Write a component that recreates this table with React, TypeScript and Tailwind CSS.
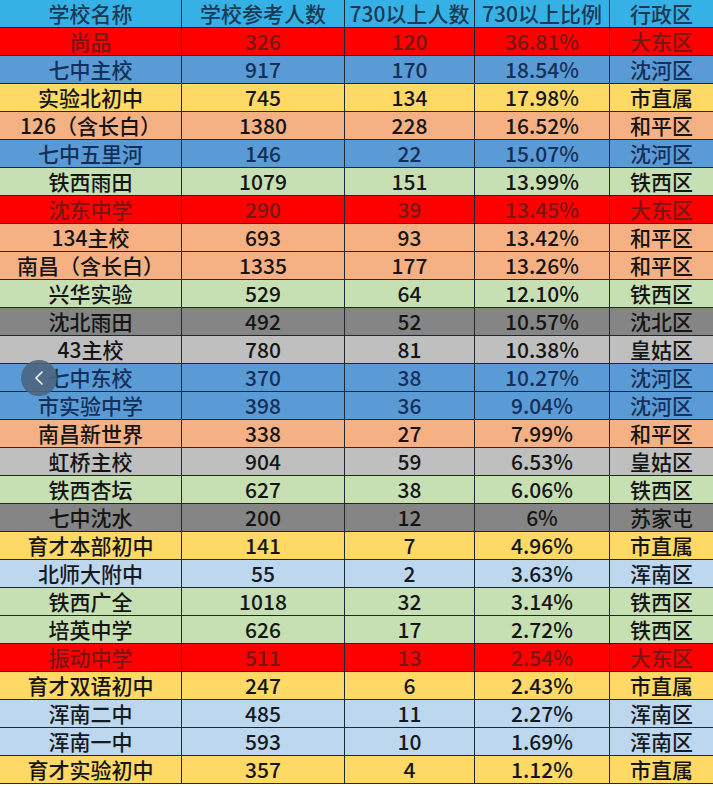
import React from "react";

type Row = [string, string, string, string, string, string];

const C: Record<string, { bg: string; fg: string }> = {
  red: { bg: "bg-[#fe0000]", fg: "text-[#7a1515]" },
  blue: { bg: "bg-[#5b9bd5]", fg: "text-[#13305a]" },
  yellow: { bg: "bg-[#fed966]", fg: "text-[#151515]" },
  orange: { bg: "bg-[#f5b184]", fg: "text-[#151515]" },
  green: { bg: "bg-[#c6e0b4]", fg: "text-[#151515]" },
  dgrey: { bg: "bg-[#858585]", fg: "text-[#151515]" },
  lgrey: { bg: "bg-[#bfbfbf]", fg: "text-[#151515]" },
  lblue: { bg: "bg-[#bdd7ee]", fg: "text-[#151a22]" },
};

const rows: Row[] = [
  ["尚品", "326", "120", "36.81%", "大东区", "red"],
  ["七中主校", "917", "170", "18.54%", "沈河区", "blue"],
  ["实验北初中", "745", "134", "17.98%", "市直属", "yellow"],
  ["126（含长白）", "1380", "228", "16.52%", "和平区", "orange"],
  ["七中五里河", "146", "22", "15.07%", "沈河区", "blue"],
  ["铁西雨田", "1079", "151", "13.99%", "铁西区", "green"],
  ["沈东中学", "290", "39", "13.45%", "大东区", "red"],
  ["134主校", "693", "93", "13.42%", "和平区", "orange"],
  ["南昌（含长白）", "1335", "177", "13.26%", "和平区", "orange"],
  ["兴华实验", "529", "64", "12.10%", "铁西区", "green"],
  ["沈北雨田", "492", "52", "10.57%", "沈北区", "dgrey"],
  ["43主校", "780", "81", "10.38%", "皇姑区", "lgrey"],
  ["七中东校", "370", "38", "10.27%", "沈河区", "blue"],
  ["市实验中学", "398", "36", "9.04%", "沈河区", "blue"],
  ["南昌新世界", "338", "27", "7.99%", "和平区", "orange"],
  ["虹桥主校", "904", "59", "6.53%", "皇姑区", "lgrey"],
  ["铁西杏坛", "627", "38", "6.06%", "铁西区", "green"],
  ["七中沈水", "200", "12", "6%", "苏家屯", "dgrey"],
  ["育才本部初中", "141", "7", "4.96%", "市直属", "yellow"],
  ["北师大附中", "55", "2", "3.63%", "浑南区", "lblue"],
  ["铁西广全", "1018", "32", "3.14%", "铁西区", "green"],
  ["培英中学", "626", "17", "2.72%", "铁西区", "green"],
  ["振动中学", "511", "13", "2.54%", "大东区", "red"],
  ["育才双语初中", "247", "6", "2.43%", "市直属", "yellow"],
  ["浑南二中", "485", "11", "2.27%", "浑南区", "lblue"],
  ["浑南一中", "593", "10", "1.69%", "浑南区", "lblue"],
  ["育才实验初中", "357", "4", "1.12%", "市直属", "yellow"],
];

const grid =
  "grid grid-cols-[182px_163px_130px_135px_103px] h-[28px] border-b border-[#1e2a33]";
const cell =
  "flex items-center justify-center border-r border-[#1e2a33] last:border-r-0 whitespace-nowrap overflow-visible leading-none";

export default function App() {
  return (
    <div
      className="relative w-[713px] h-[787px] bg-white overflow-hidden"
      style={{ fontFamily: '"Noto Sans CJK SC", "Noto Sans", sans-serif' }}
    >
      <div className="flex flex-col">
        <div className={`${grid} bg-[#35b1e6] text-[#1b3a55] text-[21px] font-medium`}>
          {["学校名称", "学校参考人数", "730以上人数", "730以上比例", "行政区"].map((h, i) => (
            <div key={i} className={cell}>
              {h}
            </div>
          ))}
        </div>
        {rows.map((r, idx) => {
          const c = C[r[5]];
          return (
            <div key={idx} className={`${grid} ${c.bg} ${c.fg} text-[21px] font-medium`}>
              {r.slice(0, 5).map((v, i) => (
                <div key={i} className={cell}>
                  {v}
                </div>
              ))}
            </div>
          );
        })}
      </div>
      <div className="absolute left-[21px] top-[360px] w-[36px] h-[36px] rounded-full bg-[#4b6580]/90 flex items-center justify-center">
        <svg width="14" height="16" viewBox="0 0 14 16" fill="none">
          <path d="M10 2 L4 8 L10 14" stroke="white" strokeWidth="1.6" strokeLinecap="round" strokeLinejoin="round" />
        </svg>
      </div>
    </div>
  );
}
